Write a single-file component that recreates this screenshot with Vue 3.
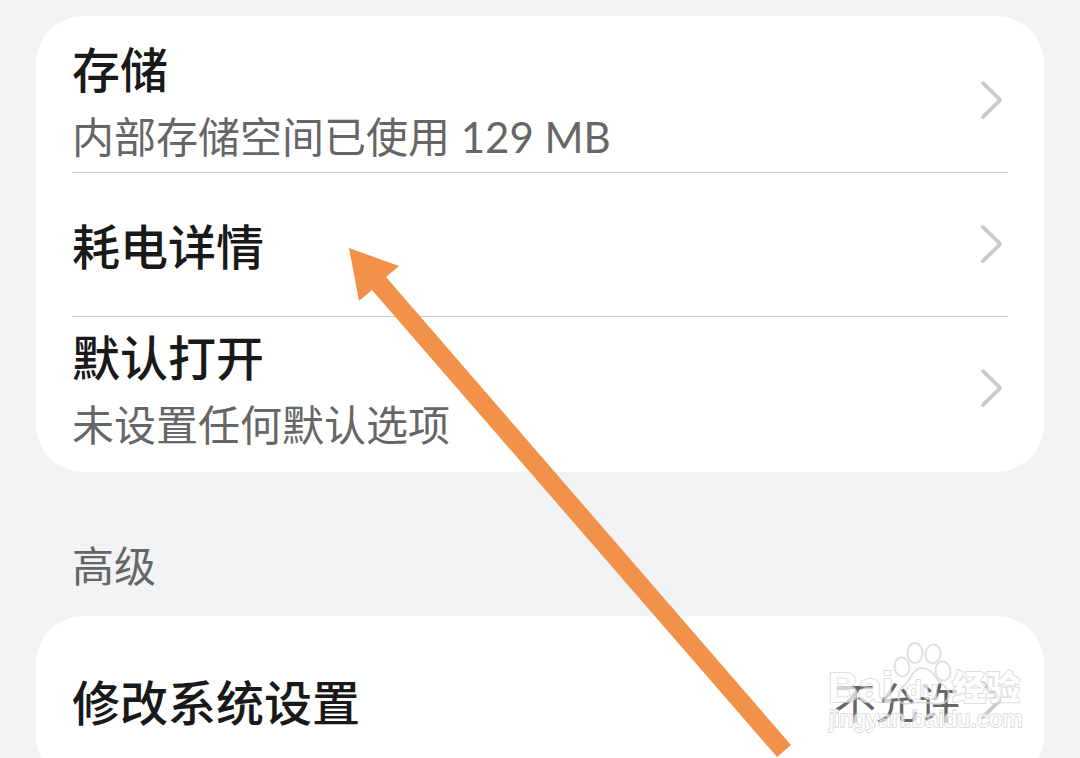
<script setup>
const storageRows = [
  { title: '存储', detail: '内部存储空间已使用 129 MB' },
  { title: '耗电详情' },
  { title: '默认打开', detail: '未设置任何默认选项' },
]
const advancedRows = [{ title: '修改系统设置', value: '不允许' }]
const groups = [
  { rows: storageRows },
  { heading: '高级', rows: advancedRows },
]
</script>

<template>
  <main class="page">
    <section v-for="(group, i) in groups" :key="i">
      <h2 v-if="group.heading" class="heading">{{ group.heading }}</h2>
      <ul class="card">
        <li v-for="row in group.rows" :key="row.title" class="item">
          <button type="button" class="row">
            <span class="labels">
              <span class="title">{{ row.title }}</span>
              <span v-if="row.detail" class="detail">{{ row.detail }}</span>
            </span>
            <span v-if="row.value" class="value">{{ row.value }}</span>
            <svg class="chevron" viewBox="0 0 24 40" aria-hidden="true">
              <path d="M3 3 L19 18.6 Q20.400 20 19 21.400 L3 37" />
            </svg>
          </button>
        </li>
      </ul>
    </section>

    <svg class="pointer" viewBox="0 0 444 512" aria-hidden="true">
      <path d="M1 1 L51 19 L38 30 L443 498 L429 510 L24 43 L11 54 Z" />
    </svg>

    <svg class="watermark" viewBox="0 0 204 100" aria-hidden="true">
      <g class="paw">
        <ellipse cx="82" cy="27" rx="7.500" ry="9.500" transform="rotate(-8 82 27)" />
        <ellipse cx="95" cy="13" rx="7.500" ry="10" />
        <ellipse cx="113" cy="14" rx="7.500" ry="9.500" transform="rotate(10 113 14)" />
        <ellipse cx="123" cy="31" rx="7.500" ry="9.500" transform="rotate(-8 123 31)" />
        <path d="M102 28 C110 28 113 34 118 40 C124 46 130 49 129 56 C127 65 117 65 111 63 C104 62 98 62 91 63 C84 65 76 63 79 54 C79 48 85 46 89 40 C93 33 96 28 102 28 Z" />
      </g>
      <text class="brand latin" x="8" y="62">Bai</text>
      <text class="brand small" x="86" y="59">du</text>
      <text class="brand cjk" x="132" y="60">经验</text>
      <text class="site" x="9" y="87">jingyan.baidu.com</text>
    </svg>
  </main>
</template>

<style>
body {
  margin: 0;
  background: #f1f3f5;
}
</style>

<style scoped>
.page {
  position: relative;
  box-sizing: border-box;
  height: 100vh;
  padding: 16px 36px 0;
  overflow: hidden;
  background: #f1f3f5;
  font-family: Lato, "Noto Sans CJK SC", sans-serif;
}

.card {
  margin: 0;
  padding: 12px 36px;
  border-radius: 48px;
  background: #fff;
  list-style: none;
}

.item + .item {
  box-shadow: inset 0 1px #c9c9c9;
}

.row {
  display: flex;
  align-items: center;
  width: 100%;
  height: 144px;
  padding: 0;
  border: 0;
  background: none;
  color: #191919;
  font: inherit;
  text-align: left;
}

.labels {
  display: flex;
  flex: 1;
  flex-direction: column;
  gap: 5px;
  padding-top: 5px;
}

.title {
  font-size: 48px;
  font-weight: 500;
  line-height: 64px;
}

.detail {
  color: #666;
  font-size: 42px;
  line-height: 60px;
}

.value {
  margin-right: 20px;
  padding-top: 5px;
  color: #666;
  font-size: 42px;
  line-height: 60px;
}

.chevron {
  width: 24px;
  height: 40px;
  margin-right: 4px;
  fill: none;
  stroke: #ccc;
  stroke-width: 4;
  stroke-linecap: round;
}

.heading {
  margin: 0;
  padding: 64px 36px 20px;
  color: #666;
  font-size: 42px;
  font-weight: 400;
  line-height: 60px;
}

.pointer {
  position: absolute;
  top: 247px;
  left: 348px;
  width: 444px;
  height: 512px;
  fill: #f29149;
  pointer-events: none;
}

.watermark {
  position: absolute;
  right: 56px;
  bottom: 18px;
  width: 204px;
  height: 100px;
  opacity: 0.7;
  pointer-events: none;
}

.paw {
  fill: none;
  stroke: #d4d4d4;
  stroke-width: 2;
}

.brand,
.site {
  fill: #fff;
  stroke: #d0d0d0;
  stroke-width: 2;
  stroke-linejoin: round;
  paint-order: stroke;
}

.brand {
  font-family: "Liberation Sans", "Noto Sans CJK SC", sans-serif;
  font-weight: 700;
}

.latin {
  font-size: 42px;
}

.small {
  font-size: 26px;
}

.cjk {
  font-size: 34px;
  font-weight: 900;
}

.site {
  font-family: "Liberation Sans", sans-serif;
  font-size: 24px;
}
</style>
